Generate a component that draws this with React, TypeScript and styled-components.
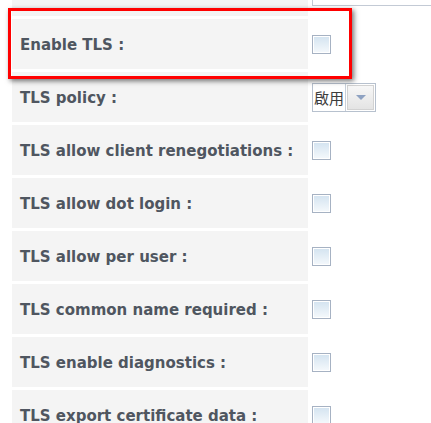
import styled, { createGlobalStyle } from "styled-components"

const GlobalStyle = createGlobalStyle`
  html, body {
    margin: 0;
    padding: 0;
    background: #ffffff;
  }
  body {
    font-family: "DejaVu Sans", Verdana, sans-serif;
    overflow: hidden;
  }
`

type Field = { label: string; kind: "check" | "select" | "text" }

const FIELDS: Field[] = [
  { label: "", kind: "text" },
  { label: "Enable TLS :", kind: "check" },
  { label: "TLS policy :", kind: "select" },
  { label: "TLS allow client renegotiations :", kind: "check" },
  { label: "TLS allow dot login :", kind: "check" },
  { label: "TLS allow per user :", kind: "check" },
  { label: "TLS common name required :", kind: "check" },
  { label: "TLS enable diagnostics :", kind: "check" },
  { label: "TLS export certificate data :", kind: "check" },
]

const App = () => {
  return (
    <StyledPage>
      <GlobalStyle />
      <StyledForm>
        {FIELDS.map((field, i) => (
          <StyledRow key={i}>
            <StyledLabel>{field.label}</StyledLabel>
            <StyledValue>
              {field.kind === "check" && <StyledCheckbox />}
              {field.kind === "text" && <StyledTextInput />}
              {field.kind === "select" && (
                <StyledSelect>
                  <StyledSelectText>啟用</StyledSelectText>
                  <StyledSelectButton>
                    <StyledArrow />
                  </StyledSelectButton>
                </StyledSelect>
              )}
            </StyledValue>
          </StyledRow>
        ))}
      </StyledForm>
      <StyledHighlight />
    </StyledPage>
  )
}

export default App

const StyledPage = styled.div`
  position: relative;
  width: 431px;
  height: 423px;
  overflow: hidden;
`
const StyledForm = styled.div`
  display: flex;
  flex-direction: column;
  gap: 3px;
  margin-top: -34px;
  padding-left: 12px;
`
const StyledRow = styled.div`
  display: flex;
  align-items: stretch;
  height: 50px;
  gap: 4px;
`
const StyledLabel = styled.div`
  width: 288px;
  flex-shrink: 0;
  background: #f4f4f4;
  padding: 2px 0 0 8px;
  display: flex;
  align-items: center;
  font-size: 15px;
  font-weight: bold;
  color: #4f5660;
  white-space: nowrap;
`
const StyledValue = styled.div`
  flex: 1;
  display: flex;
  align-items: center;
  min-width: 0;
`
const StyledCheckbox = styled.span`
  display: block;
  width: 17px;
  height: 17px;
  border: 1px solid #a6b2c3;
  box-shadow: inset 0 0 0 1px #ffffff;
  background: linear-gradient(#d3e3f0, #f5f9fc);
`
const StyledTextInput = styled.span`
  display: block;
  height: 28px;
  width: 140px;
  flex-shrink: 0;
  border: 1px solid #c3cad5;
  background: #ffffff;
`
const StyledSelect = styled.div`
  display: flex;
  height: 27px;
  border: 1px solid #b7c1ce;
  background: #ffffff;
`
const StyledSelectText = styled.span`
  display: flex;
  align-items: center;
  padding: 0 1px;
  font-family: "Noto Sans CJK TC", sans-serif;
  font-size: 15px;
  color: #3c3c3c;
  border-right: 1px solid #c8d0da;
`
const StyledSelectButton = styled.span`
  display: flex;
  align-items: center;
  justify-content: center;
  width: 25px;
  margin: 1px;
  border: 1px solid #d2d2d2;
  background: linear-gradient(#f7f7f7, #e4e4e4);
`
const StyledArrow = styled.span`
  width: 0;
  height: 0;
  border-left: 5px solid transparent;
  border-right: 5px solid transparent;
  border-top: 5px solid #8ea2c2;
`
const StyledHighlight = styled.div`
  position: absolute;
  left: 8px;
  top: 8px;
  width: 338px;
  height: 65px;
  border: 3px solid #ff0000;
  box-shadow: 2px 2px 5px rgba(0, 0, 0, 0.55);
  pointer-events: none;
`
